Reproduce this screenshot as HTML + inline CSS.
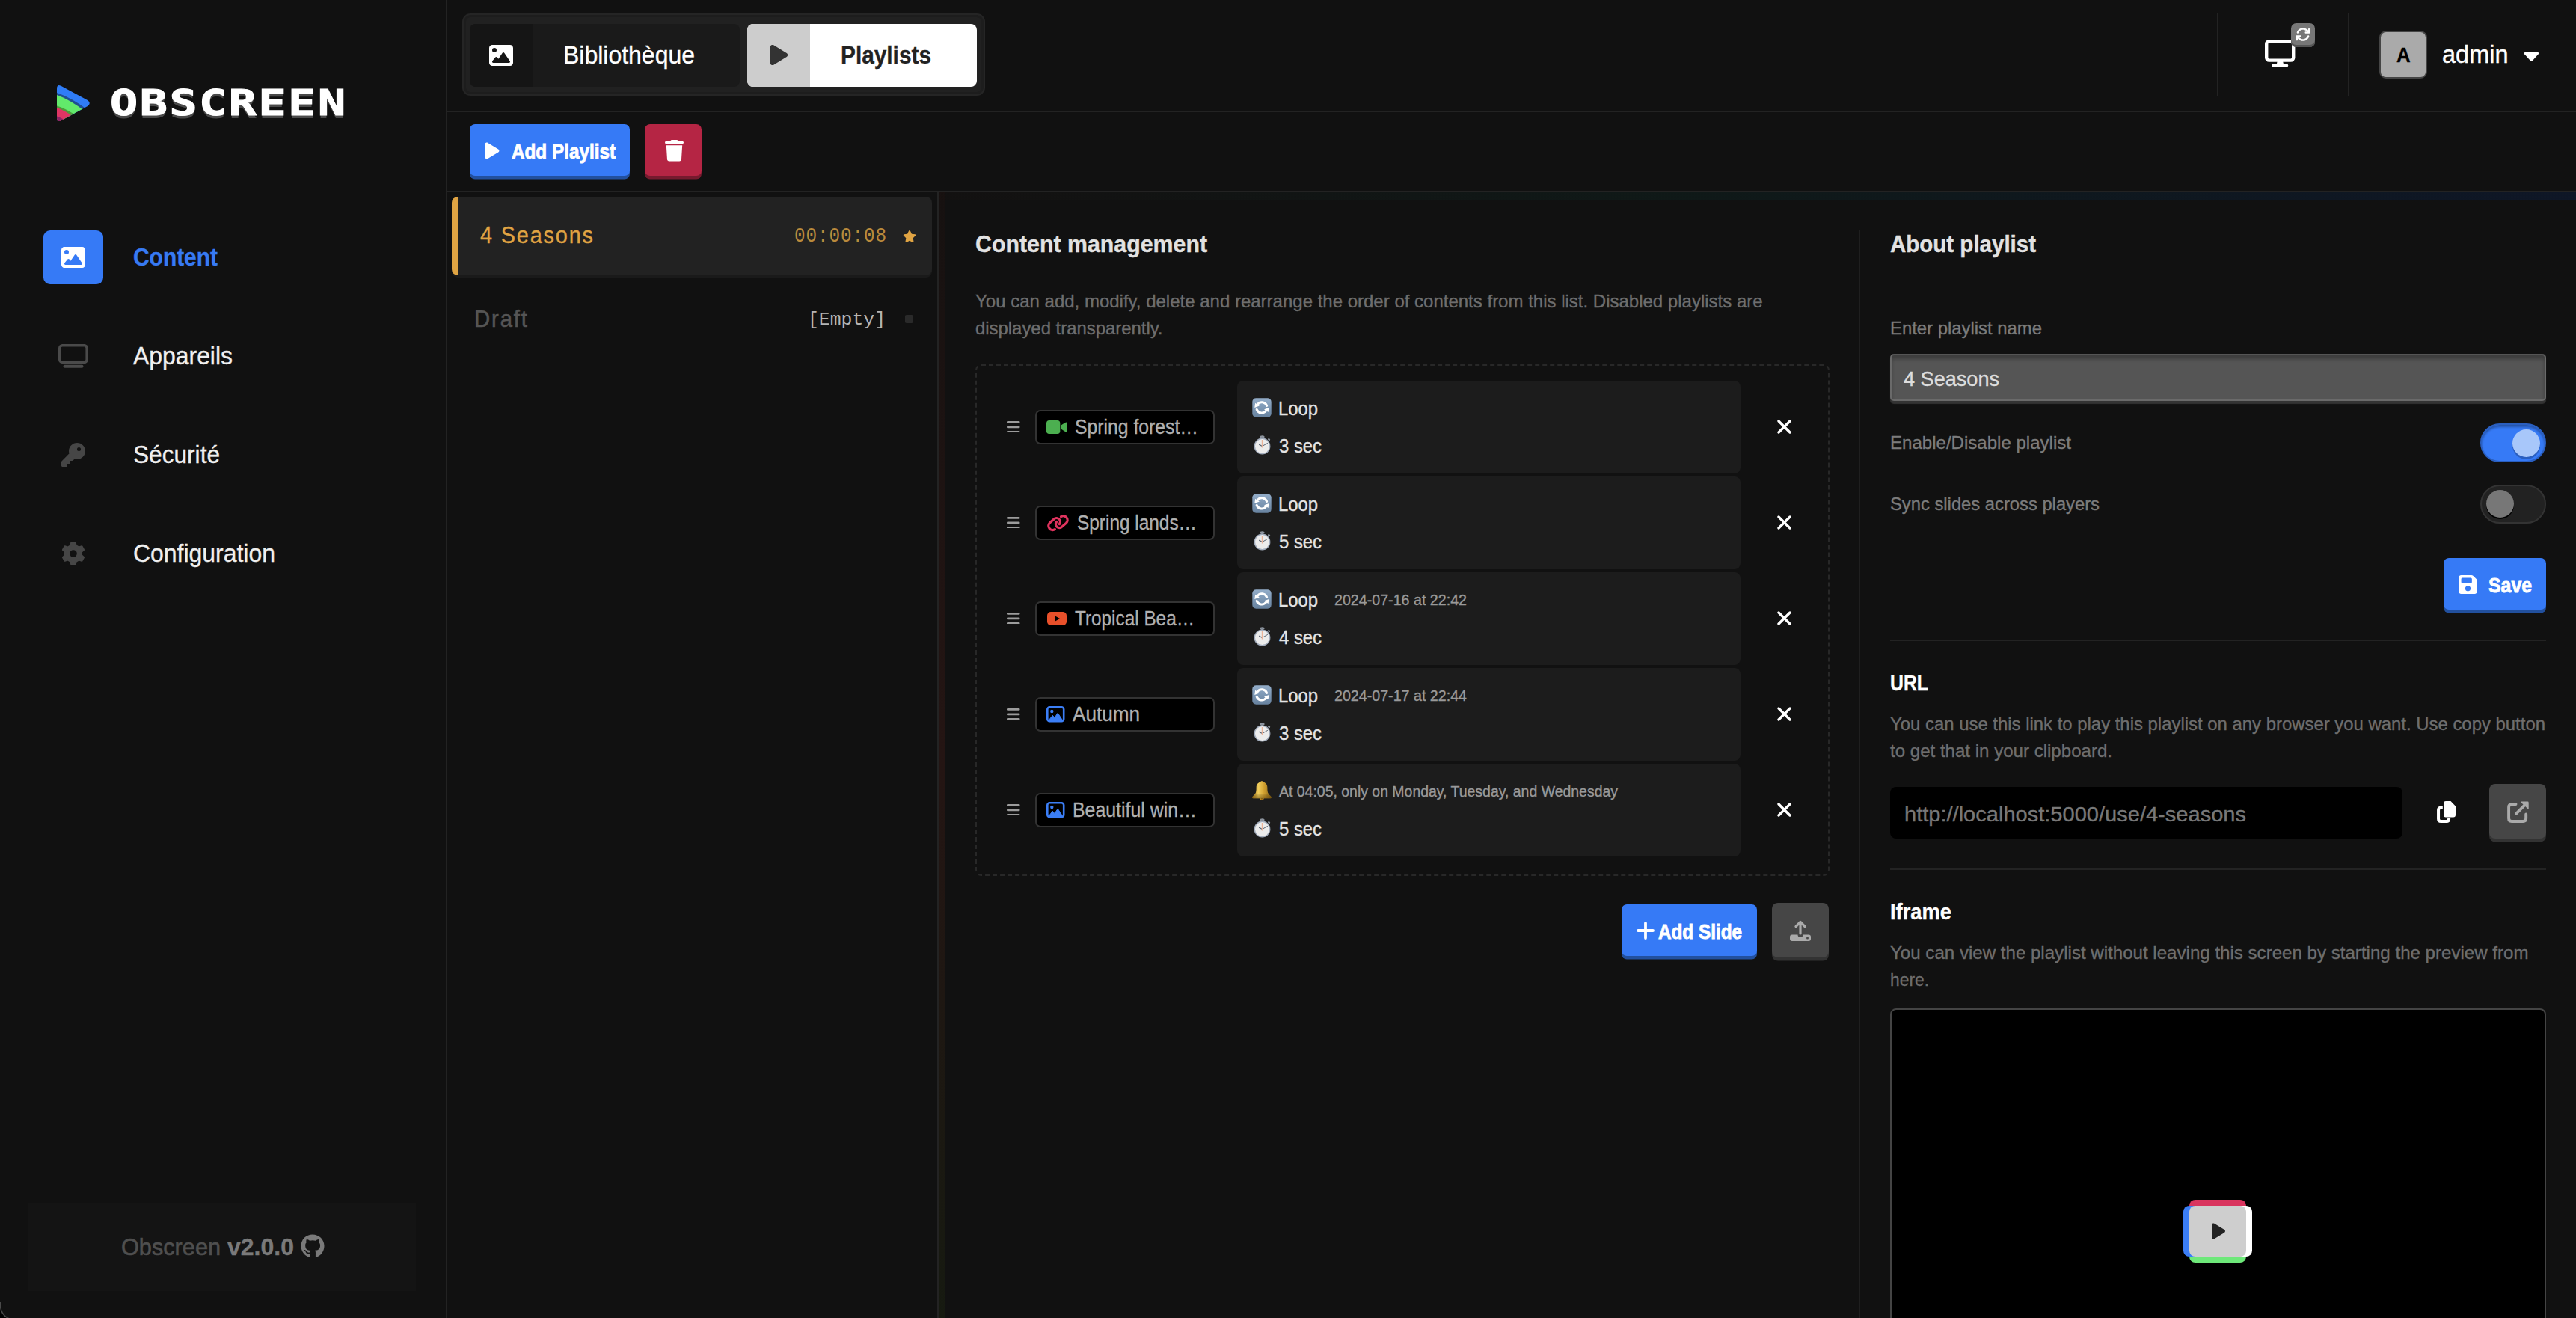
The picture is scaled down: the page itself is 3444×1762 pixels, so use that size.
<!DOCTYPE html>
<html lang="en"><head><meta charset="utf-8"><title>Obscreen - Playlists</title>
<style>
html,body{margin:0;padding:0;background:#111;}
body{width:3444px;height:1762px;position:relative;overflow:hidden;font-family:"Liberation Sans",sans-serif;}
.a{position:absolute;box-sizing:border-box;}
.t{white-space:pre;transform-origin:0 0;}

.t{-webkit-text-stroke:0.35px;}

</style></head><body>
<svg width="0" height="0" style="position:absolute"><defs>
<linearGradient id="lpg" x1="0" x2="0" y1="0" y2="1"><stop offset="0" stop-color="#93adc9"/><stop offset="1" stop-color="#67829f"/></linearGradient>
<linearGradient id="bg" x1="0" x2="1" y1="0" y2="0"><stop offset="0" stop-color="#b07f1c"/><stop offset="0.320" stop-color="#f0cd5c"/><stop offset="0.600" stop-color="#d2a231"/><stop offset="1" stop-color="#8a6414"/></linearGradient>
<linearGradient id="bs" x1="0" x2="0" y1="0" y2="1"><stop offset="0.700" stop-color="#000" stop-opacity="0"/><stop offset="1" stop-color="#5a3a00" stop-opacity="0.450"/></linearGradient>
</defs></svg>
<div class="a " style="left:596px;top:0px;width:2px;height:1762px;background:#232323"></div>
<svg class="a" style="left:76px;top:113px;" width="44" height="50" viewBox="0 0 44 50">
<defs><clipPath id="lg"><path d="M0 5.500 Q0 -1 5.500 1.800 L41 21 Q46.500 25 41 29 L5.500 48.200 Q0 51 0 44.500 Z"/></clipPath></defs>
<g clip-path="url(#lg)">
<rect width="44" height="50" fill="#2f7cf6"/>
<path d="M0 11 Q18 17 40 33 L44 60 L0 60z" fill="#1f4f8f"/>
<path d="M0 14 Q17 20 38 36 L38 60 L0 60z" fill="#62e96b"/>
<path d="M0 28.500 Q12 32 28 43 L28 60 L0 60z" fill="#4b9c3a"/>
<path d="M0 31 Q11 34.500 26 46 L26 60 L0 60z" fill="#df3564"/>
<path d="M0 42.400 Q6 44 14 50 L0 60z" fill="#8b2466"/>
</g></svg>
<span class="a t" style="left:146.5px;top:108.54px;font-size:47.5px;line-height:57px;color:#fff;font-weight:bold;font-family:'DejaVu Sans Mono', monospace;letter-spacing:2px;transform:scaleX(1.2975);text-shadow:0 4px 0 #4a4a4a;-webkit-text-stroke:1.1px #fff;">OBSCREEN</span>
<div class="a " style="left:58px;top:308px;width:80px;height:72px;background:#367af6;border-radius:9px"></div>
<svg class="a" style="left:82px;top:330px;overflow:visible" width="32" height="28" viewBox="0 32 512 448"><path fill="#fff" fill-rule="evenodd" d="M0 96C0 60.700 28.700 32 64 32H448c35.300 0 64 28.700 64 64V416c0 35.300-28.700 64-64 64H64c-35.300 0-64-28.700-64-64V96zM323.800 202.500c-4.500-6.600-11.900-10.500-19.800-10.500s-15.400 3.900-19.800 10.500l-87 127.600L170.700 297c-4.600-5.700-11.500-9-18.700-9s-14.200 3.300-18.700 9l-64 80c-5.800 7.200-6.900 17.100-2.900 25.400s12.400 13.600 21.600 13.600h96 32H424c8.900 0 17.100-4.900 21.200-12.800s3.600-17.400-1.400-24.700l-120-176zM112 192a48 48 0 1 0 0-96 48 48 0 1 0 0 96z"/></svg>
<span class="a t" style="left:178px;top:322.89px;font-size:34px;line-height:41px;color:#377af3;font-weight:bold;transform:scaleX(0.8799);">Content</span>
<svg class="a" style="left:78px;top:460px;" width="40" height="32" viewBox="0 0 40 32"><rect x="1.800" y="1.800" width="36.400" height="22.400" rx="3.500" fill="none" stroke="#4a4a4a" stroke-width="3.600"/><rect x="6.500" y="27.800" width="27" height="4" rx="2" fill="#4a4a4a"/></svg>
<span class="a t" style="left:178px;top:454.89px;font-size:34px;line-height:41px;color:#f0f0f0;transform:scaleX(0.9383);">Appareils</span>
<svg class="a" style="left:82px;top:592px;" width="32" height="32" viewBox="0 0 512 512"><path fill="#464646" d="M336 352c97.200 0 176-78.800 176-176S433.200 0 336 0 160 78.800 160 176c0 18.700 2.900 36.800 8.300 53.700L7 391c-4.500 4.500-7 10.600-7 17v80c0 13.300 10.700 24 24 24h80c13.300 0 24-10.700 24-24v-40h40c13.300 0 24-10.700 24-24v-40h40c6.400 0 12.500-2.500 17-7l33.300-33.300c16.900 5.400 35 8.300 53.700 8.300zM376 96a40 40 0 1 1 0 80 40 40 0 1 1 0-80z"/></svg>
<span class="a t" style="left:178px;top:586.89px;font-size:34px;line-height:41px;color:#f0f0f0;transform:scaleX(0.9300);">Sécurité</span>
<svg class="a" style="left:82px;top:723.5px;" width="32" height="32" viewBox="0 0 100 100"><path fill="#464646" fill-rule="evenodd" stroke="#464646" stroke-width="7" stroke-linejoin="round" d="M39.2 16.7 L41.8 4.2 L58.2 4.2 L60.8 16.7 L73.4 24.0 L85.5 20.0 L93.8 34.2 L84.2 42.7 L84.2 57.3 L93.8 65.8 L85.5 80.0 L73.4 76.0 L60.8 83.3 L58.2 95.8 L41.8 95.8 L39.2 83.3 L26.6 76.0 L14.5 80.0 L6.2 65.8 L15.8 57.3 L15.8 42.7 L6.2 34.2 L14.5 20.0 L26.6 24.0Z"/><circle cx="50" cy="50" r="15" fill="#111"/></svg>
<span class="a t" style="left:178px;top:718.89px;font-size:34px;line-height:41px;color:#f0f0f0;transform:scaleX(0.9394);">Configuration</span>
<div class="a " style="left:38px;top:1608px;width:518px;height:118px;background:#141414"></div>
<span class="a t" style="left:162px;top:1647.87px;font-size:32px;line-height:38px;color:#4f4f4f;transform:scaleX(0.9587);-webkit-text-stroke:0.6px #4f4f4f;">Obscreen</span>
<span class="a t" style="left:304px;top:1647.87px;font-size:32px;line-height:38px;color:#7a7a7a;font-weight:bold;">v2.0.0</span>
<svg class="a" style="left:402px;top:1650px;" width="32" height="32" viewBox="0 0 496 512"><path fill="#7a7a7a" d="M165.900 397.400c0 2-2.300 3.600-5.200 3.600-3.300.300-5.600-1.300-5.600-3.600 0-2 2.300-3.600 5.200-3.600 3-.300 5.600 1.300 5.600 3.600zm-31.100-4.500c-.700 2 1.300 4.300 4.300 4.900 2.600 1 5.600 0 6.200-2s-1.300-4.300-4.300-5.200c-2.600-.700-5.500.300-6.200 2.300zm44.200-1.700c-2.900.700-4.900 2.600-4.600 4.900.300 2 2.900 3.300 5.900 2.600 2.900-.700 4.900-2.600 4.600-4.600-.300-1.900-3-3.200-5.900-2.900zM244.800 8C106.100 8 0 113.300 0 252c0 110.900 69.800 205.800 169.500 239.200 12.800 2.300 17.300-5.600 17.300-12.100 0-6.200-.300-40.400-.300-61.400 0 0-70 15-84.700-29.800 0 0-11.400-29.100-27.800-36.600 0 0-22.900-15.700 1.600-15.400 0 0 24.900 2 38.600 25.800 21.900 38.600 58.600 27.500 72.900 20.900 2.300-16 8.800-27.100 16-33.700-55.900-6.200-112.300-14.300-112.300-110.500 0-27.500 7.600-41.300 23.600-58.900-2.600-6.500-11.100-33.300 2.600-67.900 20.900-6.500 69 27 69 27 20-5.600 41.500-8.500 62.800-8.500s42.800 2.900 62.800 8.500c0 0 48.100-33.600 69-27 13.700 34.700 5.200 61.400 2.600 67.900 16 17.700 25.800 31.500 25.800 58.900 0 96.500-58.900 104.200-114.800 110.500 9.200 7.900 17 22.900 17 46.400 0 33.700-.300 75.400-.300 83.600 0 6.500 4.600 14.400 17.300 12.100C428.200 457.800 496 362.900 496 252 496 113.300 383.500 8 244.800 8z"/></svg>
<div class="a " style="left:598px;top:148px;width:2846px;height:2px;background:#232323"></div>
<div class="a " style="left:598px;top:255px;width:2846px;height:2px;background:#232323"></div>
<div class="a " style="left:1255px;top:257px;width:2189px;height:10px;background:linear-gradient(to right, rgba(40,15,10,0.08), rgba(10,45,40,0.28) 45%, rgba(10,30,70,0.4))"></div>
<div class="a " style="left:618px;top:18px;width:699px;height:110px;background:#212121;border:2px solid #252525;border-radius:11px;box-shadow:inset 0 0 0 3px #1d1d1d"></div>
<div class="a " style="left:628px;top:32px;width:361px;height:84px;background:#1a1a1a;border-radius:8px"></div>
<div class="a " style="left:628px;top:32px;width:84px;height:84px;background:#151515;border-radius:8px 0 0 8px"></div>
<svg class="a" style="left:654px;top:59.5px;overflow:visible" width="32" height="28" viewBox="0 32 512 448"><path fill="#fff" fill-rule="evenodd" d="M0 96C0 60.700 28.700 32 64 32H448c35.300 0 64 28.700 64 64V416c0 35.300-28.700 64-64 64H64c-35.300 0-64-28.700-64-64V96zM323.800 202.500c-4.500-6.600-11.900-10.500-19.800-10.500s-15.400 3.900-19.800 10.500l-87 127.600L170.700 297c-4.600-5.700-11.500-9-18.700-9s-14.200 3.300-18.700 9l-64 80c-5.800 7.200-6.900 17.100-2.900 25.400s12.400 13.600 21.600 13.600h96 32H424c8.900 0 17.100-4.900 21.200-12.800s3.600-17.400-1.400-24.700l-120-176zM112 192a48 48 0 1 0 0-96 48 48 0 1 0 0 96z"/></svg>
<span class="a t" style="left:753px;top:52.89px;font-size:34px;line-height:41px;color:#fff;transform:scaleX(0.9404);">Bibliothèque</span>
<div class="a " style="left:999px;top:32px;width:307px;height:84px;background:#fff;border-radius:8px"></div>
<div class="a " style="left:999px;top:32px;width:84px;height:84px;background:#cdcdcd;border-radius:8px 0 0 8px"></div>
<svg class="a" style="left:1029px;top:58px;" width="25" height="31" viewBox="0 0 384 512"><path fill="#333" d="M73 39c-14.800-9.100-33.400-9.400-48.500-.9S0 62.600 0 80v352c0 17.400 9.400 33.400 24.500 41.900s33.700 8.100 48.500-.9l288-176c14.300-8.700 23-24.200 23-41s-8.700-32.200-23-41z"/></svg>
<span class="a t" style="left:1124px;top:52.89px;font-size:34px;line-height:41px;color:#222;font-weight:bold;transform:scaleX(0.8769);">Playlists</span>
<div class="a " style="left:2964px;top:18px;width:2px;height:110px;background:#232323"></div>
<div class="a " style="left:3139px;top:18px;width:2px;height:110px;background:#232323"></div>
<svg class="a" style="left:3027.6px;top:53px;" width="41" height="37" viewBox="0 0 41 37"><rect x="2.200" y="2.200" width="36" height="25.400" rx="3.500" fill="none" stroke="#fff" stroke-width="4.400"/><rect x="9.400" y="32.200" width="21.800" height="4.600" rx="2.300" fill="#fff"/><path d="M16.600 29h7.600l0.800 4h-9.200z" fill="#fff"/></svg>
<div class="a " style="left:3063px;top:31px;width:32px;height:32px;background:#777;border-radius:7px;box-shadow:inset 0 -3px 0 #555"></div>
<svg class="a" style="left:3069px;top:36px;" width="20" height="20" viewBox="0 0 512 512"><path fill="#fff" d="M105.100 202.600c7.700-21.800 20.200-42.300 37.800-59.800 62.500-62.500 163.800-62.500 226.300 0L386.300 160H352c-17.700 0-32 14.300-32 32s14.300 32 32 32h111.500c17.700 0 32-14.300 32-32V80c0-17.700-14.300-32-32-32s-32 14.300-32 32v35.200L414.400 97.600c-87.500-87.500-229.300-87.500-316.800 0-24.400 24.400-42 53.100-52.800 83.800-5.900 16.700 2.900 34.900 19.500 40.800s34.900-2.900 40.800-19.500zM39 289.300c-5 1.500-9.800 4.200-13.700 8.200-4 4-6.700 8.800-8.100 14-.300 1.200-.600 2.500-.800 3.800-.300 1.700-.400 3.400-.400 5.100V432c0 17.700 14.300 32 32 32s32-14.300 32-32v-35.100l17.600 17.500c87.500 87.400 229.300 87.400 316.700 0 24.400-24.400 42.100-53.100 52.900-83.700 5.900-16.700-2.900-34.900-19.500-40.800s-34.900 2.900-40.800 19.500c-7.700 21.800-20.200 42.300-37.800 59.800-62.500 62.500-163.800 62.500-226.300 0L125.600 352H160c17.700 0 32-14.300 32-32s-14.300-32-32-32H48.400c-1.600 0-3.200.100-4.800.300s-3.100.500-4.600 1z"/></svg>
<div class="a " style="left:3181px;top:41px;width:64px;height:64px;background:#aaa;border:2.500px solid #454545;border-radius:9px"></div>
<span class="a t" style="left:3203.7px;top:56.33px;font-size:28.3px;line-height:34px;color:#000;font-weight:bold;transform:scaleX(0.9150);">A</span>
<span class="a t" style="left:3265px;top:51.89px;font-size:34px;line-height:41px;color:#fff;transform:scaleX(0.9556);">admin</span>
<svg class="a" style="left:3373.7px;top:69.8px;" width="20.8" height="12.6" viewBox="0 0 20 12"><path d="M1.500 0h17q1.500 0.500 0.500 2l-8 9q-1 1-2 0l-8-9q-1-1.500 0.500-2z" fill="#fff"/></svg>
<div class="a " style="left:628px;top:166px;width:214px;height:68.5px;background:#367af6;border-radius:7px;box-shadow:0 4.500px 0 #22509e"></div>
<svg class="a" style="left:647px;top:189px;" width="22" height="25" viewBox="0 0 384 512"><path fill="#fff" d="M73 39c-14.800-9.100-33.400-9.400-48.500-.9S0 62.600 0 80v352c0 17.400 9.400 33.400 24.500 41.900s33.700 8.100 48.500-.9l288-176c14.300-8.700 23-24.200 23-41s-8.700-32.200-23-41z"/></svg>
<span class="a t" style="left:684px;top:184.53px;font-size:28.5px;line-height:34px;color:#fff;font-weight:bold;transform:scaleX(0.8521);-webkit-text-stroke:0.9px #fff;">Add Playlist</span>
<div class="a " style="left:862px;top:166px;width:76px;height:68.5px;background:#b52544;border-radius:7px;box-shadow:0 4.500px 0 #761a2e"></div>
<svg class="a" style="left:888.5px;top:187px;" width="25" height="28.5" viewBox="0 0 448 512"><path fill="#fff" d="M135.200 17.700L128 32H32C14.300 32 0 46.300 0 64s14.300 32 32 32h384c17.700 0 32-14.300 32-32s-14.300-32-32-32h-96l-7.200-14.300C307.400 6.800 296.300 0 284.200 0H163.800c-12.100 0-23.200 6.800-28.600 17.700zM416 128H32l21.200 339c1.600 25.300 22.600 45 47.900 45h245.800c25.300 0 46.300-19.700 47.900-45L416 128z"/></svg>
<div class="a " style="left:1253px;top:257px;width:2px;height:1505px;background:#232323"></div>
<div class="a " style="left:604px;top:263px;width:642px;height:105px;background:#222;border-radius:8px;border-left:8px solid #e0a443;box-shadow:0 3px 0 #1a1a1a"></div>
<span class="a t" style="left:642px;top:295.86px;font-size:31px;line-height:37px;color:#e0a443;letter-spacing:2px;transform:scaleX(0.9292);">4 Seasons</span>
<span class="a t" style="left:1062px;top:299.81px;font-size:27px;line-height:32px;color:#b98a3c;font-family:'Liberation Mono', monospace;letter-spacing:1px;transform:scaleX(0.9003);-webkit-text-stroke:0;">00:00:08</span>
<svg class="a" style="left:1207px;top:307px;" width="18" height="18" viewBox="0 0 576 512"><path fill="#e0a443" d="M316.900 18C311.600 7 300.400 0 288.100 0s-23.400 7-28.800 18L195 150.300 51.400 171.500c-12 1.800-22 10.200-25.700 21.700s-.700 24.200 7.900 32.700L137.800 329 113.200 474.700c-2 12 3 24.200 12.900 31.300s23 8 33.800 2.300l128.300-68.500 128.300 68.500c10.800 5.700 23.900 4.900 33.800-2.300s14.900-19.300 12.900-31.300L438.500 329 542.700 225.900c8.600-8.500 11.700-21.200 7.900-32.700s-13.700-19.900-25.700-21.700L381.200 150.300 316.900 18z"/></svg>
<span class="a t" style="left:634px;top:407.86px;font-size:31px;line-height:37px;color:#555;letter-spacing:2px;transform:scaleX(0.9443);-webkit-text-stroke:0.6px #555;">Draft</span>
<span class="a t" style="left:1079.5px;top:412.78px;font-size:24px;line-height:29px;color:#b5b5b5;font-family:'Liberation Mono', monospace;transform:scaleX(1.0315);-webkit-text-stroke:0;">[Empty]</span>
<div class="a " style="left:1210px;top:421px;width:11px;height:11px;background:#2a2a2a;border-radius:2px"></div>
<div class="a " style="left:1255px;top:257px;width:9px;height:1505px;background:linear-gradient(to bottom, rgba(50,18,12,0.15), rgba(80,30,24,0.3) 50%, rgba(35,48,15,0.28))"></div>
<span class="a t" style="left:1304px;top:307.37px;font-size:32px;line-height:38px;color:#e2e2e2;font-weight:bold;transform:scaleX(0.9476);">Content management</span>
<span class="a t" style="left:1304px;top:388.28px;font-size:24px;line-height:29px;color:#6e6e6e;">You can add, modify, delete and rearrange the order of contents from this list. Disabled playlists are</span>
<span class="a t" style="left:1304px;top:424.28px;font-size:24px;line-height:29px;color:#6e6e6e;transform:scaleX(0.9952);">displayed transparently.</span>
<div class="a " style="left:1304px;top:487px;width:1142px;height:684px;border:2px dashed #282828;border-radius:8px"></div>
<svg class="a" style="left:1346px;top:562.7px;" width="17.5" height="15.6" viewBox="0 0 17.500 15.600"><g fill="#9c9c9c"><rect y="0" width="17.500" height="2.700" rx="1.200"/><rect y="6.450" width="17.500" height="2.700" rx="1.200"/><rect y="12.900" width="17.500" height="2.700" rx="1.200"/></g></svg>
<div class="a " style="left:1384px;top:548px;width:240px;height:46px;background:#000;border:2px solid #333;border-radius:7px"><svg class="a" style="left:13.300px;top:12px" width="27.500" height="18" viewBox="0 0 27.500 18"><rect x="0" y="0" width="18.300" height="18" rx="3.800" fill="#4caf50"/><path d="M19.500 6.500l5.500-3.500q2.500-1.300 2.500 1v10q0 2.300-2.500 1l-5.500-3.500z" fill="#4caf50"/></svg></div>
<span class="a t" style="left:1437px;top:555.31px;font-size:27px;line-height:32px;color:#b0b0b0;transform:scaleX(0.9163);">Spring forest…</span>
<div class="a " style="left:1654px;top:509px;width:673px;height:124px;background:#1c1c1c;border-radius:8px"></div>
<svg class="a" style="left:1674px;top:532px;" width="26" height="26" viewBox="0 0 26 26"><rect x="0.300" y="0.300" width="25.400" height="25.400" rx="5" fill="url(#lpg)"/>
<path d="M19.670 10.440A7.200 7.200 0 0 0 7.200 8.600" fill="none" stroke="#fff" stroke-width="3" stroke-linecap="round"/><path d="M3.300 12.900L4.200 6.700L9.800 10.500z" fill="#fff"/>
<path d="M6.130 15.360A7.200 7.200 0 0 0 18.600 17.200" fill="none" stroke="#fff" stroke-width="3" stroke-linecap="round"/><path d="M22.500 12.900L21.600 19.100L16 15.300z" fill="#fff"/></svg>
<span class="a t" style="left:1709px;top:530.79px;font-size:25px;line-height:30px;color:#e4e4e4;transform:scaleX(0.9528);">Loop</span>
<svg class="a" style="left:1673.5px;top:580.7px;" width="27" height="27" viewBox="0 0 27 27"><ellipse cx="13.500" cy="2.900" rx="3.100" ry="1.700" fill="#8d949e"/><rect x="12" y="3.500" width="3" height="2.500" fill="#7c838d"/>
<rect x="21" y="5.300" width="3.200" height="2.400" rx="1" transform="rotate(42 22.600 6.500)" fill="#8d949e"/>
<circle cx="13.500" cy="15.500" r="10.900" fill="#a3adbd"/><circle cx="13.500" cy="15.500" r="9.500" fill="#ececec"/>
<path d="M13.500 15.500L9.600 13.400" stroke="#5a6472" stroke-width="1.200" stroke-linecap="round"/><path d="M13.500 15.500L20.500 11.500" stroke="#5a6472" stroke-width="1" stroke-linecap="round"/>
<path d="M13.500 7V17.500" stroke="#eab49a" stroke-width="1.400"/></svg>
<span class="a t" style="left:1709.5px;top:580.79px;font-size:25px;line-height:30px;color:#e4e4e4;transform:scaleX(0.9537);">3 sec</span>
<svg class="a" style="left:2376px;top:561px;" width="19" height="19" viewBox="0 0 19 19"><path d="M2 2L17 17M17 2L2 17" stroke="#fff" stroke-width="3.400" stroke-linecap="round"/></svg>
<svg class="a" style="left:1346px;top:690.7px;" width="17.5" height="15.6" viewBox="0 0 17.500 15.600"><g fill="#9c9c9c"><rect y="0" width="17.500" height="2.700" rx="1.200"/><rect y="6.450" width="17.500" height="2.700" rx="1.200"/><rect y="12.900" width="17.500" height="2.700" rx="1.200"/></g></svg>
<div class="a " style="left:1384px;top:676px;width:240px;height:46px;background:#000;border:2px solid #333;border-radius:7px"><svg class="a" style="left:4px;top:0px" width="50" height="42" viewBox="0 0 50 42"><g fill="none" stroke="#e0335e" stroke-width="3.300" stroke-linecap="round"><path d="M20.370 29.650 A5.600 5.600 0 0 1 13.350 21.040 L19.060 16.070 A4.900 4.900 0 0 1 26.350 22.600"/><path d="M20.370 29.650 A5.600 5.600 0 0 1 13.350 21.040 L19.060 16.070 A4.900 4.900 0 0 1 26.350 22.600" transform="rotate(180 24.450 21.100)"/></g></svg></div>
<span class="a t" style="left:1440px;top:683.31px;font-size:27px;line-height:32px;color:#b0b0b0;transform:scaleX(0.9034);">Spring lands…</span>
<div class="a " style="left:1654px;top:637px;width:673px;height:124px;background:#1c1c1c;border-radius:8px"></div>
<svg class="a" style="left:1674px;top:660px;" width="26" height="26" viewBox="0 0 26 26"><rect x="0.300" y="0.300" width="25.400" height="25.400" rx="5" fill="url(#lpg)"/>
<path d="M19.670 10.440A7.200 7.200 0 0 0 7.200 8.600" fill="none" stroke="#fff" stroke-width="3" stroke-linecap="round"/><path d="M3.300 12.900L4.200 6.700L9.800 10.500z" fill="#fff"/>
<path d="M6.130 15.360A7.200 7.200 0 0 0 18.600 17.200" fill="none" stroke="#fff" stroke-width="3" stroke-linecap="round"/><path d="M22.500 12.900L21.600 19.100L16 15.300z" fill="#fff"/></svg>
<span class="a t" style="left:1709px;top:658.79px;font-size:25px;line-height:30px;color:#e4e4e4;transform:scaleX(0.9528);">Loop</span>
<svg class="a" style="left:1673.5px;top:708.7px;" width="27" height="27" viewBox="0 0 27 27"><ellipse cx="13.500" cy="2.900" rx="3.100" ry="1.700" fill="#8d949e"/><rect x="12" y="3.500" width="3" height="2.500" fill="#7c838d"/>
<rect x="21" y="5.300" width="3.200" height="2.400" rx="1" transform="rotate(42 22.600 6.500)" fill="#8d949e"/>
<circle cx="13.500" cy="15.500" r="10.900" fill="#a3adbd"/><circle cx="13.500" cy="15.500" r="9.500" fill="#ececec"/>
<path d="M13.500 15.500L9.600 13.400" stroke="#5a6472" stroke-width="1.200" stroke-linecap="round"/><path d="M13.500 15.500L20.500 11.500" stroke="#5a6472" stroke-width="1" stroke-linecap="round"/>
<path d="M13.500 7V17.500" stroke="#eab49a" stroke-width="1.400"/></svg>
<span class="a t" style="left:1709.5px;top:708.79px;font-size:25px;line-height:30px;color:#e4e4e4;transform:scaleX(0.9537);">5 sec</span>
<svg class="a" style="left:2376px;top:689px;" width="19" height="19" viewBox="0 0 19 19"><path d="M2 2L17 17M17 2L2 17" stroke="#fff" stroke-width="3.400" stroke-linecap="round"/></svg>
<svg class="a" style="left:1346px;top:818.7px;" width="17.5" height="15.6" viewBox="0 0 17.500 15.600"><g fill="#9c9c9c"><rect y="0" width="17.500" height="2.700" rx="1.200"/><rect y="6.450" width="17.500" height="2.700" rx="1.200"/><rect y="12.900" width="17.500" height="2.700" rx="1.200"/></g></svg>
<div class="a " style="left:1384px;top:804px;width:240px;height:46px;background:#000;border:2px solid #333;border-radius:7px"><svg class="a" style="left:14px;top:12px" width="26" height="18" viewBox="0 0 26 18"><rect x="0" y="0" width="26" height="18" rx="5" fill="#e8502a"/><path d="M10.300 5.200l6.700 3.800-6.700 3.800z" fill="#000"/></svg></div>
<span class="a t" style="left:1437px;top:811.31px;font-size:27px;line-height:32px;color:#b0b0b0;transform:scaleX(0.9010);">Tropical Bea…</span>
<div class="a " style="left:1654px;top:765px;width:673px;height:124px;background:#1c1c1c;border-radius:8px"></div>
<svg class="a" style="left:1674px;top:788px;" width="26" height="26" viewBox="0 0 26 26"><rect x="0.300" y="0.300" width="25.400" height="25.400" rx="5" fill="url(#lpg)"/>
<path d="M19.670 10.440A7.200 7.200 0 0 0 7.200 8.600" fill="none" stroke="#fff" stroke-width="3" stroke-linecap="round"/><path d="M3.300 12.900L4.200 6.700L9.800 10.500z" fill="#fff"/>
<path d="M6.130 15.360A7.200 7.200 0 0 0 18.600 17.200" fill="none" stroke="#fff" stroke-width="3" stroke-linecap="round"/><path d="M22.500 12.900L21.600 19.100L16 15.300z" fill="#fff"/></svg>
<span class="a t" style="left:1709px;top:786.79px;font-size:25px;line-height:30px;color:#e4e4e4;transform:scaleX(0.9528);">Loop</span>
<span class="a t" style="left:1784px;top:789.73px;font-size:20px;line-height:24px;color:#999;transform:scaleX(0.9825);">2024-07-16 at 22:42</span>
<svg class="a" style="left:1673.5px;top:836.7px;" width="27" height="27" viewBox="0 0 27 27"><ellipse cx="13.500" cy="2.900" rx="3.100" ry="1.700" fill="#8d949e"/><rect x="12" y="3.500" width="3" height="2.500" fill="#7c838d"/>
<rect x="21" y="5.300" width="3.200" height="2.400" rx="1" transform="rotate(42 22.600 6.500)" fill="#8d949e"/>
<circle cx="13.500" cy="15.500" r="10.900" fill="#a3adbd"/><circle cx="13.500" cy="15.500" r="9.500" fill="#ececec"/>
<path d="M13.500 15.500L9.600 13.400" stroke="#5a6472" stroke-width="1.200" stroke-linecap="round"/><path d="M13.500 15.500L20.500 11.500" stroke="#5a6472" stroke-width="1" stroke-linecap="round"/>
<path d="M13.500 7V17.500" stroke="#eab49a" stroke-width="1.400"/></svg>
<span class="a t" style="left:1709.5px;top:836.79px;font-size:25px;line-height:30px;color:#e4e4e4;transform:scaleX(0.9537);">4 sec</span>
<svg class="a" style="left:2376px;top:817px;" width="19" height="19" viewBox="0 0 19 19"><path d="M2 2L17 17M17 2L2 17" stroke="#fff" stroke-width="3.400" stroke-linecap="round"/></svg>
<svg class="a" style="left:1346px;top:946.7px;" width="17.5" height="15.6" viewBox="0 0 17.500 15.600"><g fill="#9c9c9c"><rect y="0" width="17.500" height="2.700" rx="1.200"/><rect y="6.450" width="17.500" height="2.700" rx="1.200"/><rect y="12.900" width="17.500" height="2.700" rx="1.200"/></g></svg>
<div class="a " style="left:1384px;top:932px;width:240px;height:46px;background:#000;border:2px solid #333;border-radius:7px"><svg class="a" style="left:13.300px;top:10.300px" width="24.500" height="21.500" viewBox="0 0 24.500 21.500"><rect x="1.300" y="1.300" width="21.900" height="18.900" rx="3" fill="none" stroke="#3b7ef6" stroke-width="2.600"/><circle cx="7.300" cy="7" r="2.200" fill="#3b7ef6"/><path d="M3.500 18.500l4.800-6.200 2.600 3.200 4.300-6.300 6.100 9.300z" fill="#3b7ef6" stroke="#3b7ef6" stroke-width="1" stroke-linejoin="round"/></svg></div>
<span class="a t" style="left:1434px;top:939.31px;font-size:27px;line-height:32px;color:#b0b0b0;transform:scaleX(0.9671);">Autumn</span>
<div class="a " style="left:1654px;top:893px;width:673px;height:124px;background:#1c1c1c;border-radius:8px"></div>
<svg class="a" style="left:1674px;top:916px;" width="26" height="26" viewBox="0 0 26 26"><rect x="0.300" y="0.300" width="25.400" height="25.400" rx="5" fill="url(#lpg)"/>
<path d="M19.670 10.440A7.200 7.200 0 0 0 7.200 8.600" fill="none" stroke="#fff" stroke-width="3" stroke-linecap="round"/><path d="M3.300 12.900L4.200 6.700L9.800 10.500z" fill="#fff"/>
<path d="M6.130 15.360A7.200 7.200 0 0 0 18.600 17.200" fill="none" stroke="#fff" stroke-width="3" stroke-linecap="round"/><path d="M22.500 12.900L21.600 19.100L16 15.300z" fill="#fff"/></svg>
<span class="a t" style="left:1709px;top:914.79px;font-size:25px;line-height:30px;color:#e4e4e4;transform:scaleX(0.9528);">Loop</span>
<span class="a t" style="left:1784px;top:917.73px;font-size:20px;line-height:24px;color:#999;transform:scaleX(0.9825);">2024-07-17 at 22:44</span>
<svg class="a" style="left:1673.5px;top:964.7px;" width="27" height="27" viewBox="0 0 27 27"><ellipse cx="13.500" cy="2.900" rx="3.100" ry="1.700" fill="#8d949e"/><rect x="12" y="3.500" width="3" height="2.500" fill="#7c838d"/>
<rect x="21" y="5.300" width="3.200" height="2.400" rx="1" transform="rotate(42 22.600 6.500)" fill="#8d949e"/>
<circle cx="13.500" cy="15.500" r="10.900" fill="#a3adbd"/><circle cx="13.500" cy="15.500" r="9.500" fill="#ececec"/>
<path d="M13.500 15.500L9.600 13.400" stroke="#5a6472" stroke-width="1.200" stroke-linecap="round"/><path d="M13.500 15.500L20.500 11.500" stroke="#5a6472" stroke-width="1" stroke-linecap="round"/>
<path d="M13.500 7V17.500" stroke="#eab49a" stroke-width="1.400"/></svg>
<span class="a t" style="left:1709.5px;top:964.79px;font-size:25px;line-height:30px;color:#e4e4e4;transform:scaleX(0.9537);">3 sec</span>
<svg class="a" style="left:2376px;top:945px;" width="19" height="19" viewBox="0 0 19 19"><path d="M2 2L17 17M17 2L2 17" stroke="#fff" stroke-width="3.400" stroke-linecap="round"/></svg>
<svg class="a" style="left:1346px;top:1074.7px;" width="17.5" height="15.6" viewBox="0 0 17.500 15.600"><g fill="#9c9c9c"><rect y="0" width="17.500" height="2.700" rx="1.200"/><rect y="6.450" width="17.500" height="2.700" rx="1.200"/><rect y="12.900" width="17.500" height="2.700" rx="1.200"/></g></svg>
<div class="a " style="left:1384px;top:1060px;width:240px;height:46px;background:#000;border:2px solid #333;border-radius:7px"><svg class="a" style="left:13.300px;top:10.300px" width="24.500" height="21.500" viewBox="0 0 24.500 21.500"><rect x="1.300" y="1.300" width="21.900" height="18.900" rx="3" fill="none" stroke="#3b7ef6" stroke-width="2.600"/><circle cx="7.300" cy="7" r="2.200" fill="#3b7ef6"/><path d="M3.500 18.500l4.800-6.200 2.600 3.200 4.300-6.300 6.100 9.300z" fill="#3b7ef6" stroke="#3b7ef6" stroke-width="1" stroke-linejoin="round"/></svg></div>
<span class="a t" style="left:1434px;top:1067.31px;font-size:27px;line-height:32px;color:#b0b0b0;transform:scaleX(0.9217);">Beautiful win…</span>
<div class="a " style="left:1654px;top:1021px;width:673px;height:124px;background:#1c1c1c;border-radius:8px"></div>
<svg class="a" style="left:1674px;top:1043.7px;" width="26" height="26" viewBox="0 0 26 26"><circle cx="13" cy="23" r="2.700" fill="#b98319"/><circle cx="13" cy="23.300" r="1.200" fill="#6e4a0c"/>
<path d="M13 0.300c-1 0-1.600 0.500-1.700 1.300C7.500 2.300 5.600 5.200 5.600 9c0 4-0.200 6.500-1.800 8.600C2.500 19.300 0.600 20.600 0.200 22q-0.200 1.300 1.300 1.300h23q1.500 0 1.300-1.300c-0.400-1.400-2.300-2.700-3.600-4.400C20.600 15.500 20.400 13 20.400 9c0-3.800-1.900-6.700-5.700-7.400C14.600 0.800 14 0.300 13 0.300z" fill="url(#bg)"/>
<path d="M13 0.300c-1 0-1.600 0.500-1.700 1.300C7.500 2.300 5.600 5.200 5.600 9c0 4-0.200 6.500-1.800 8.600C2.500 19.300 0.600 20.600 0.200 22q-0.200 1.300 1.300 1.300h23q1.500 0 1.300-1.300c-0.400-1.400-2.300-2.700-3.600-4.400C20.600 15.500 20.400 13 20.400 9c0-3.800-1.900-6.700-5.700-7.400C14.600 0.800 14 0.300 13 0.300z" fill="url(#bs)"/></svg>
<span class="a t" style="left:1710px;top:1045.73px;font-size:20px;line-height:24px;color:#999;transform:scaleX(0.9724);">At 04:05, only on Monday, Tuesday, and Wednesday</span>
<svg class="a" style="left:1673.5px;top:1092.7px;" width="27" height="27" viewBox="0 0 27 27"><ellipse cx="13.500" cy="2.900" rx="3.100" ry="1.700" fill="#8d949e"/><rect x="12" y="3.500" width="3" height="2.500" fill="#7c838d"/>
<rect x="21" y="5.300" width="3.200" height="2.400" rx="1" transform="rotate(42 22.600 6.500)" fill="#8d949e"/>
<circle cx="13.500" cy="15.500" r="10.900" fill="#a3adbd"/><circle cx="13.500" cy="15.500" r="9.500" fill="#ececec"/>
<path d="M13.500 15.500L9.600 13.400" stroke="#5a6472" stroke-width="1.200" stroke-linecap="round"/><path d="M13.500 15.500L20.500 11.500" stroke="#5a6472" stroke-width="1" stroke-linecap="round"/>
<path d="M13.500 7V17.500" stroke="#eab49a" stroke-width="1.400"/></svg>
<span class="a t" style="left:1709.5px;top:1092.79px;font-size:25px;line-height:30px;color:#e4e4e4;transform:scaleX(0.9537);">5 sec</span>
<svg class="a" style="left:2376px;top:1073px;" width="19" height="19" viewBox="0 0 19 19"><path d="M2 2L17 17M17 2L2 17" stroke="#fff" stroke-width="3.400" stroke-linecap="round"/></svg>
<div class="a " style="left:2168px;top:1209px;width:181px;height:68.5px;background:#367af6;border-radius:7px;box-shadow:0 4.500px 0 #22509e"></div>
<svg class="a" style="left:2188px;top:1232px;" width="24" height="24" viewBox="0 0 24 24"><path d="M12 2v20M2 12h20" stroke="#fff" stroke-width="3.800" stroke-linecap="round"/></svg>
<span class="a t" style="left:2217px;top:1227.83px;font-size:28.5px;line-height:34px;color:#fff;font-weight:bold;transform:scaleX(0.8521);-webkit-text-stroke:0.9px #fff;">Add Slide</span>
<div class="a " style="left:2369px;top:1207px;width:76px;height:72.5px;background:#464646;border-radius:8px;box-shadow:0 4.500px 0 #333"></div>
<svg class="a" style="left:2393px;top:1230px;" width="28" height="28" viewBox="0 0 28 28"><g fill="none" stroke="#aaa" stroke-width="3.200" stroke-linecap="round" stroke-linejoin="round"><path d="M14 18V3M8 8.500L14 2.500l6 6"/></g><path d="M3 19.500h7.500a3.500 3.500 0 0 0 7 0H25q3 0 3 3v2.500q0 3-3 3H3q-3 0-3-3v-2.500q0-3 3-3z" fill="#aaa"/><circle cx="23.500" cy="24" r="1.500" fill="#464646"/></svg>
<div class="a " style="left:2485px;top:307px;width:2px;height:1455px;background:#1f1f1f"></div>
<span class="a t" style="left:2527px;top:307.37px;font-size:32px;line-height:38px;color:#e2e2e2;font-weight:bold;transform:scaleX(0.9217);">About playlist</span>
<span class="a t" style="left:2527px;top:423.78px;font-size:24px;line-height:29px;color:#7c7c7c;transform:scaleX(0.9946);">Enter playlist name</span>
<div class="a " style="left:2527px;top:473px;width:877px;height:63px;background:#555;border:2px solid #6a6a6a;border-top-color:#555;border-radius:5px;box-shadow:inset 0 5px 5px rgba(0,0,0,0.280), 0 3.500px 1px #343434"></div>
<span class="a t" style="left:2545px;top:489.82px;font-size:28px;line-height:34px;color:#ddd;transform:scaleX(0.9673);">4 Seasons</span>
<span class="a t" style="left:2527px;top:577.18px;font-size:24px;line-height:29px;color:#7c7c7c;transform:scaleX(1.0022);">Enable/Disable playlist</span>
<div class="a " style="left:3316px;top:566px;width:88px;height:52px;background:#367af6;border-radius:26px;border:2px solid #2a5fc0;box-shadow:inset 0 3px 3px rgba(0,0,0,0.300)"></div>
<div class="a " style="left:3359px;top:574px;width:37px;height:37px;background:#a8c7fa;border-radius:50%;box-shadow:0 3px 0 #2a5fc0"></div>
<span class="a t" style="left:2527px;top:658.78px;font-size:24px;line-height:29px;color:#7c7c7c;transform:scaleX(0.9902);">Sync slides across players</span>
<div class="a " style="left:3316px;top:648px;width:88px;height:52px;background:#222;border-radius:26px;border:2px solid #333"></div>
<div class="a " style="left:3324px;top:657px;width:37px;height:37px;background:#000;border-radius:50%"></div>
<div class="a " style="left:3324px;top:655px;width:37px;height:37px;background:#777;border-radius:50%"></div>
<div class="a " style="left:3267px;top:746px;width:137px;height:68.5px;background:#367af6;border-radius:7px;box-shadow:0 4.500px 0 #22509e"></div>
<svg class="a" style="left:3287px;top:769px;" width="25" height="25" viewBox="0 0 448 448"><path fill="#fff" fill-rule="evenodd" d="M64 0C28.700 0 0 28.700 0 64v320c0 35.300 28.700 64 64 64h320c35.300 0 64-28.700 64-64V141.300c0-17-6.700-33.300-18.700-45.300L352 18.700C340 6.700 323.700 0 306.700 0H64zM96 64h192c17.700 0 32 14.300 32 32v64c0 17.700-14.300 32-32 32H96c-17.700 0-32-14.300-32-32V96c0-17.700 14.300-32 32-32zM224 256a64 64 0 1 1 0 128 64 64 0 1 1 0-128z"/></svg>
<span class="a t" style="left:3327px;top:764.83px;font-size:28.5px;line-height:34px;color:#fff;font-weight:bold;transform:scaleX(0.8714);-webkit-text-stroke:0.9px #fff;">Save</span>
<div class="a " style="left:2527px;top:855px;width:877px;height:2px;background:#232323"></div>
<span class="a t" style="left:2527px;top:895.83px;font-size:29px;line-height:35px;color:#fff;font-weight:bold;transform:scaleX(0.8556);">URL</span>
<span class="a t" style="left:2527px;top:952.78px;font-size:24px;line-height:29px;color:#6e6e6e;transform:scaleX(0.9959);">You can use this link to play this playlist on any browser you want. Use copy button</span>
<span class="a t" style="left:2527px;top:988.78px;font-size:24px;line-height:29px;color:#6e6e6e;transform:scaleX(1.0027);">to get that in your clipboard.</span>
<div class="a " style="left:2527px;top:1052px;width:685px;height:69px;background:#000;border-radius:8px"></div>
<span class="a t" style="left:2546px;top:1072.32px;font-size:28px;line-height:34px;color:#787878;transform:scaleX(1.0374);">http://localhost:5000/use/4-seasons</span>
<svg class="a" style="left:3258px;top:1070px;" width="27" height="31" viewBox="0 0 27 31"><path d="M11 9.800H5.500Q2.050 9.800 2.050 13V24.800Q2.050 28 5.500 28H12.700Q16.100 28 16.100 24.800V21" fill="none" stroke="#fff" stroke-width="4"/><path d="M12 0.900h6.500l6.500 6.900v11.800q0 3-3 3H12q-3 0-3-3V3.900q0-3 3-3z" fill="#fff" stroke="#111" stroke-width="2.400" paint-order="stroke"/></svg>
<div class="a " style="left:3328px;top:1048px;width:76px;height:73px;background:#464646;border-radius:8px;box-shadow:0 4.500px 0 #333"></div>
<svg class="a" style="left:3350px;top:1068px;" width="34" height="34" viewBox="0 0 34 34"><g fill="none" stroke="#aaa" stroke-width="3.900" stroke-linecap="round"><path d="M13.500 7H8Q4.100 7 4.100 11V26Q4.100 30 8 30H23.200Q27.200 30 27.200 26V20.500"/><path d="M13.900 19.800L26 7.700"/></g><path d="M21.400 3.600h8q1.300 0 1.300 1.300v8q0 1.500-1.100 0.400l-9-8.600q-0.900-1.100 0.800-1.100z" fill="#aaa"/></svg>
<div class="a " style="left:2527px;top:1161px;width:877px;height:2px;background:#232323"></div>
<span class="a t" style="left:2527px;top:1201.83px;font-size:29px;line-height:35px;color:#fff;font-weight:bold;transform:scaleX(0.9420);">Iframe</span>
<span class="a t" style="left:2527px;top:1258.78px;font-size:24px;line-height:29px;color:#6e6e6e;transform:scaleX(1.0039);">You can view the playlist without leaving this screen by starting the preview from</span>
<span class="a t" style="left:2527px;top:1294.78px;font-size:24px;line-height:29px;color:#6e6e6e;transform:scaleX(0.9506);">here.</span>
<div class="a " style="left:2527px;top:1348px;width:877px;height:440px;background:#000;border:2px solid #444;border-radius:8px"></div>
<div class="a " style="left:2927px;top:1604px;width:76px;height:60px;background:#d9345e;border-radius:8px"></div>
<div class="a " style="left:2927px;top:1630px;width:76px;height:58px;background:#6ee87a;border-radius:8px"></div>
<div class="a " style="left:2919px;top:1612px;width:60px;height:68px;background:#3b7ef6;border-radius:8px"></div>
<div class="a " style="left:2960px;top:1612px;width:51px;height:68px;background:#fff;border-radius:8px"></div>
<div class="a " style="left:2927px;top:1612px;width:76px;height:68px;background:#cecece;border-radius:8px"></div>
<svg class="a" style="left:2957px;top:1634px;" width="18" height="24" viewBox="0 0 384 512"><path fill="#222" d="M73 39c-14.800-9.100-33.400-9.400-48.500-.9S0 62.600 0 80v352c0 17.400 9.400 33.400 24.500 41.900s33.700 8.100 48.500-.9l288-176c14.300-8.700 23-24.200 23-41s-8.700-32.200-23-41z"/></svg>
<div class="a " style="left:0px;top:1740px;width:22px;height:22px;background:radial-gradient(circle at 20px 5px, rgba(0,0,0,0) 18.300px, #4a4a4a 19.300px, #4a4a4a 19.800px, #000 20.800px)"></div>
</body></html>
